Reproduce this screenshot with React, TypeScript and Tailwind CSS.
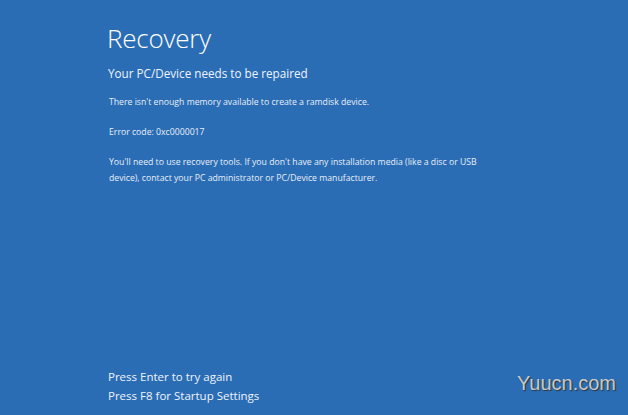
import React from "react";

export default function App() {
  return (
    <div
      className="relative flex h-[415px] w-[628px] flex-col justify-between overflow-hidden bg-[#2a6db4] pl-[107px] text-white"
      style={{ fontFamily: '"Open Sans", "Noto Sans", sans-serif' }}
    >
      <div className="pt-[18px]">
        <h1 className="text-[26px] font-light leading-[40px] tracking-[-0.2px]">Recovery</h1>
        <h2 className="mt-[6px] pl-[1px] text-[11.7px] leading-[18px] text-[#eef3fa]">Your PC/Device needs to be repaired</h2>
        <div className="mt-[12px] flex flex-col gap-[14px] pl-[2px] text-[8.7px] leading-[16px] text-[#e8eef8]">
          <p>There isn't enough memory available to create a ramdisk device.</p>
          <p>Error code: 0xc0000017</p>
          <p className="w-[376px]">
            You'll need to use recovery tools. If you don't have any installation media (like a disc or USB device), contact your PC administrator or PC/Device manufacturer.
          </p>
        </div>
      </div>

      <div className="flex flex-col pb-[10px] pl-[1px] text-[11.5px] leading-[19px] text-[#eef3fa]">
        <span>Press Enter to try again</span>
        <span>Press F8 for Startup Settings</span>
      </div>

      <span
        className="absolute right-[12px] bottom-[20px] text-[20px] leading-[24px] text-[#c8c8c8] [text-shadow:1px_1px_1px_#333]"
        style={{ fontFamily: '"Liberation Sans", Arial, sans-serif' }}
      >
        Yuucn.com
      </span>
    </div>
  );
}
